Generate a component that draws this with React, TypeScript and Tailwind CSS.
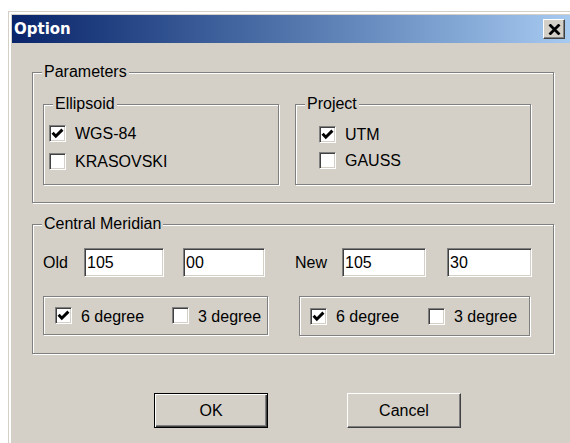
import type { ReactNode } from 'react';

const font = { fontFamily: '"Liberation Sans", Arial, sans-serif' };

function GroupBox({ label, className, children }: { label: string; className: string; children: ReactNode }) {
  return (
    <div className={`relative border border-[#808080] shadow-[1px_1px_0_#fff,inset_1px_1px_0_#fff] ${className}`}>
      <span className="absolute top-[-10px] bg-[#d4d0c8] px-[2px] text-[16px] leading-[18px] text-black left-[9px]">
        {label}
      </span>
      {children}
    </div>
  );
}

function CheckBox({ checked }: { checked?: boolean }) {
  return (
    <span className="flex h-[17px] w-[17px] shrink-0 items-center justify-center border border-t-[#808080] border-l-[#808080] border-b-white border-r-white bg-white shadow-[inset_1px_1px_0_#404040,inset_-1px_-1px_0_#d4d0c8]">
      {checked && (
        <svg width="15" height="15" viewBox="0 0 15 15">
          <path d="M2.6 6.8 L5.8 10.2 L12.4 3.6" fill="none" stroke="#000" strokeWidth="3" />
        </svg>
      )}
    </span>
  );
}

function Option({ label, checked, className = '' }: { label: string; checked?: boolean; className?: string }) {
  return (
    <div className={`flex items-center ${className}`}>
      <CheckBox checked={checked} />
      <span className="ml-[9px] translate-y-[1px] text-[16px] leading-[18px] text-black">{label}</span>
    </div>
  );
}

function Field({ value, width }: { value: string; width: string }) {
  return (
    <div
      className={`flex h-[29px] items-center border border-t-[#808080] border-l-[#808080] border-b-white border-r-white bg-white pl-[2px] pt-[1px] text-[16px] text-black shadow-[inset_1px_1px_0_#404040,inset_-1px_-1px_0_#d4d0c8] ${width}`}
    >
      {value}
    </div>
  );
}

export default function App() {
  return (
    <div className="h-[443px] w-[570px] overflow-hidden bg-white" style={font}>
      <div className="ml-[8px] mt-[11px] h-[440px] w-[566px] border border-[#d4d0c8] bg-[#d4d0c8] p-[3px] shadow-[inset_2px_2px_0_#fff]">
        {/* Title bar */}
        <div className="flex h-[28px] items-center bg-gradient-to-r from-[#0a246a] to-[#a6caf0] pl-[2px]">
          <span
            className="text-[15px] font-bold text-white"
            style={{ fontFamily: '"DejaVu Sans", Tahoma, sans-serif' }}
          >
            Option
          </span>
          <button className="ml-auto mr-[5px] flex h-[20px] w-[22px] items-center justify-center border border-t-white border-l-white border-b-[#404040] border-r-[#404040] bg-[#d4d0c8] shadow-[inset_-1px_-1px_0_#808080]">
            <svg width="13" height="11" viewBox="0 0 13 11">
              <path d="M1.5 0.5 L11.5 10.5 M11.5 0.5 L1.5 10.5" stroke="#000" strokeWidth="2.8" />
            </svg>
          </button>
        </div>

        <div className="ml-[20px]">
          <GroupBox label="Parameters" className="mt-[29px] h-[131px] w-[522px] pl-[10px] pt-[31px]">
            <div className="flex gap-[16px]">
              <GroupBox label="Ellipsoid" className="h-[81px] w-[236px] pl-[5px] pt-[19px]">
                <div className="flex flex-col gap-[10px]">
                  <Option label="WGS-84" checked />
                  <Option label="KRASOVSKI" />
                </div>
              </GroupBox>
              <GroupBox label="Project" className="h-[81px] w-[236px] pl-[23px] pt-[20px]">
                <div className="flex flex-col gap-[8px]">
                  <Option label="UTM" checked />
                  <Option label="GAUSS" />
                </div>
              </GroupBox>
            </div>
          </GroupBox>

          <GroupBox label="Central Meridian" className="mt-[21px] h-[130px] w-[522px] pl-[10px] pt-[23px]">
            <div className="flex items-center text-[16px] text-black">
              <span className="w-[41px]">Old</span>
              <Field value="105" width="w-[80px]" />
              <Field value="00" width="ml-[19px] w-[82px]" />
              <span className="ml-[30px] w-[47px]">New</span>
              <Field value="105" width="w-[84px]" />
              <Field value="30" width="ml-[21px] w-[85px]" />
            </div>
            <div className="mt-[19px] flex">
              <div className="flex h-[39px] w-[225px] items-center border border-[#808080] pl-[11px] shadow-[1px_1px_0_#fff,inset_1px_1px_0_#fff]">
                <Option label="6 degree" checked className="w-[117px]" />
                <Option label="3 degree" />
              </div>
              <div className="ml-[31px] flex h-[40px] w-[231px] items-center border border-[#808080] pl-[10px] shadow-[1px_1px_0_#fff,inset_1px_1px_0_#fff]">
                <Option label="6 degree" checked className="w-[118px]" />
                <Option label="3 degree" />
              </div>
            </div>
          </GroupBox>

          <div className="ml-[122px] mt-[39px] flex gap-[79px]">
            <button className="h-[35px] w-[114px] border border-black bg-[#d4d0c8] text-[16px] text-black shadow-[inset_1px_1px_0_#fff,inset_-1px_-1px_0_#404040,inset_-2px_-2px_0_#808080]">
              OK
            </button>
            <button className="h-[35px] w-[114px] border border-t-white border-l-white border-b-[#404040] border-r-[#404040] bg-[#d4d0c8] text-[16px] text-black shadow-[inset_-1px_-1px_0_#808080]">
              Cancel
            </button>
          </div>
        </div>
      </div>
    </div>
  );
}
